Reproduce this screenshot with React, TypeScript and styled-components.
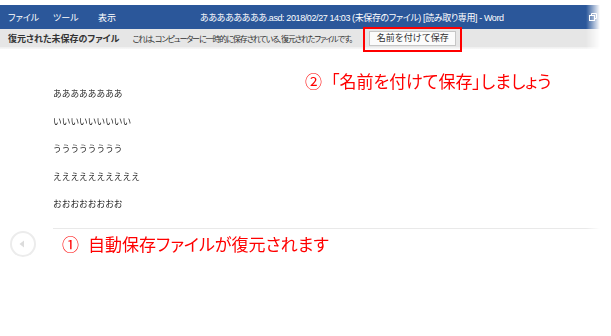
import * as React from "react";
import styled, { createGlobalStyle } from "styled-components";

const BLEU_WORD = "#2b579a";
const ROUGE = "#ff0000";
const FONTE = `"Liberation Sans", "Noto Sans CJK JP", sans-serif`;

const StyleGlobal = createGlobalStyle`
    html, body {
        margin: 0;
        padding: 0;
        background: #ffffff;
    }
    body {
        font-family: ${FONTE};
    }
`;

const Page = styled.div`
    width: 611px;
    height: 336px;
    overflow: hidden;
    background: #ffffff;
`;

/* Capture d'écran : bord droit estompé. */
const Fenetre = styled.div`
    width: 600px;
    padding-top: 5px;
    -webkit-mask-image: linear-gradient(to right, #000 586px, transparent 600px);
    mask-image: linear-gradient(to right, #000 586px, transparent 600px);
`;

const BarreTitre = styled.div`
    height: 24px;
    background: ${BLEU_WORD};
    color: #ffffff;
    display: flex;
    align-items: center;
    padding-left: 8px;
    font-size: 9px;
    font-feature-settings: "palt";
    white-space: nowrap;
`;

const Menu = styled.span`
    width: 45px;
    flex: none;
`;

const Titre = styled.span`
    margin-left: 57px;
    letter-spacing: -0.4px;
    flex: none;
`;

const IconeRestaurer = styled.svg`
    margin-left: auto;
    margin-right: 3px;
    flex: none;
`;

const BarreInfo = styled.div`
    height: 18px;
    background: #e6e6e6;
    color: #333333;
    display: flex;
    align-items: center;
    padding-left: 8px;
    font-size: 9px;
    font-feature-settings: "palt";
    white-space: nowrap;
`;

const Gras = styled.span`
    font-weight: bold;
    flex: none;
`;

const TexteInfo = styled.span`
    margin-left: 13px;
    font-size: 8px;
    letter-spacing: -1.1px;
    flex: none;
`;

const Cadre = styled.span`
    position: relative;
    margin-left: 17px;
    display: inline-flex;
    flex: none;
`;

const BoutonEnregistrer = styled.button`
    width: 87px;
    height: 15px;
    padding: 0;
    background: #fbfbfb;
    border: 1px solid #c6c6c6;
    color: #333333;
    font-family: ${FONTE};
    font-size: 9px;
    line-height: 13px;
`;

/* Annotation rouge par-dessus le bouton. */
const EncadreRouge = styled.span`
    position: absolute;
    left: -6px;
    right: -6px;
    top: -4px;
    bottom: -6px;
    border: 2px solid ${ROUGE};
    box-sizing: border-box;
    pointer-events: none;
`;

const Ombre = styled.div`
    height: 2px;
    background: linear-gradient(#efefef, #f8f8f8);
`;

const Document = styled.div`
    position: relative;
    padding: 31px 0 0 53px;
`;

const Ligne = styled.p`
    margin: 0;
    height: 27.5px;
    line-height: 27.5px;
    font-family: "Noto Sans CJK JP", sans-serif;
    font-size: 8.7px;
    color: #262626;
`;

const Annotation = styled.div`
    color: ${ROUGE};
    font-family: "Noto Sans CJK JP", sans-serif;
    font-size: 17px;
    font-feature-settings: "palt";
    white-space: nowrap;
`;

const AnnotationFlottante = styled(Annotation)`
    position: absolute;
    left: 305px;
    top: 21px;
    line-height: 22px;
`;

const Numero = styled.span`
    margin-right: 9px;
`;

const PiedPage = styled.div`
    display: flex;
    align-items: flex-start;
    margin-top: 10.5px;
`;

const BoutonRetour = styled.svg`
    flex: none;
    margin: 3px 0 0 10px;
`;

const Section = styled.div`
    flex: 1;
    margin-left: 17px;
    border-top: 1px solid #e9e9e9;
    padding: 2px 0 0 9px;
    line-height: 26px;
`;

const lignes = [
    "ああああああああ",
    "いいいいいいいいい",
    "うううううううう",
    "ええええええええええ",
    "おおおおおおおお",
];

export default function App() {
    return (
        <Page>
            <StyleGlobal />
            <Fenetre>
                <BarreTitre>
                    <Menu>ファイル</Menu>
                    <Menu>ツール</Menu>
                    <Menu>表示</Menu>
                    <Titre>ああああああああ.asd: 2018/02/27 14:03 (未保存のファイル) [読み取り専用] - Word</Titre>
                    <IconeRestaurer width="8" height="8" viewBox="0 0 8 8">
                        <rect x="0.5" y="2.5" width="5" height="5" fill="none" stroke="#fff" strokeWidth="1" />
                        <path d="M2.5 2.5V0.5H7.5V5.5H5.5" fill="none" stroke="#fff" strokeWidth="1" />
                    </IconeRestaurer>
                </BarreTitre>
                <BarreInfo>
                    <Gras>復元された未保存のファイル</Gras>
                    <TexteInfo>これは、コンピューターに一時的に保存されている、復元されたファイルです。</TexteInfo>
                    <Cadre>
                        <BoutonEnregistrer>名前を付けて保存</BoutonEnregistrer>
                        <EncadreRouge />
                    </Cadre>
                </BarreInfo>
                <Ombre />
                <Document>
                    {lignes.map((l) => <Ligne key={l}>{l}</Ligne>)}
                    <AnnotationFlottante>
                        <Numero>②</Numero>「名前を付けて保存」しましょう
                    </AnnotationFlottante>
                </Document>
                <PiedPage>
                    <BoutonRetour width="26" height="26" viewBox="0 0 26 26">
                        <circle cx="13" cy="13" r="12" fill="#ffffff" stroke="#ececec" strokeWidth="2" />
                        <path d="M9.5 13L14 9.5V16.5Z" fill="#dcdcdc" />
                    </BoutonRetour>
                    <Section>
                        <Annotation>
                            <Numero>①</Numero>自動保存ファイルが復元されます
                        </Annotation>
                    </Section>
                </PiedPage>
            </Fenetre>
        </Page>
    );
}
